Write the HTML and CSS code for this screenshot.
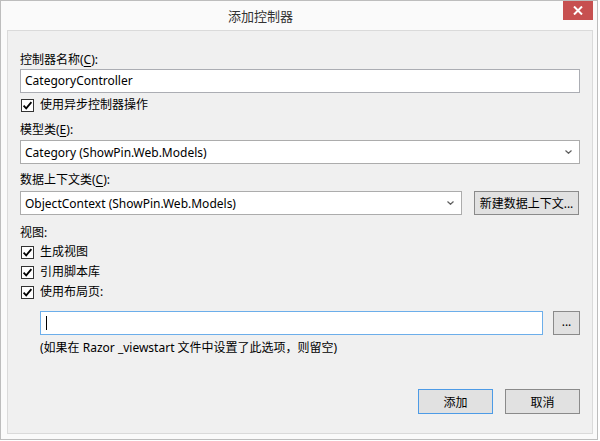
FILE: index.html
```html
<!DOCTYPE html>
<html lang="zh-CN">
<head>
<meta charset="utf-8">
<title>添加控制器</title>
<link rel="stylesheet" href="styles.css">
</head>
<body>
<div class="window">
  <div class="titlebar">
    <div class="title">添加控制器</div>
    <div class="close">
      <svg width="10" height="9" viewBox="0 0 10 9"><path d="M1 0.5 L9 8.5 M9 0.5 L1 8.5" stroke="#fff" stroke-width="2"/></svg>
    </div>
  </div>
  <div class="panel">
    <div class="label">控制器名称(<u>C</u>):</div>
    <div class="textbox t1">CategoryController</div>
    <div class="check c1"><span class="box"><svg width="11" height="11" viewBox="0 0 11 11"><path d="M1.6 5.6 L4.2 8.3 L9.4 2.2" fill="none" stroke="#000" stroke-width="1.8"/></svg></span><span>使用异步控制器操作</span></div>
    <div class="label l2">模型类(<u>E</u>):</div>
    <div class="select s2"><span>Category (ShowPin.Web.Models)</span><svg class="arrow" width="7" height="4" viewBox="0 0 7 4"><path d="M0.5 0.5 L3.5 3.3 L6.5 0.5" fill="none" stroke="#606060" stroke-width="1.2"/></svg></div>
    <div class="label l3">数据上下文类(<u>C</u>):</div>
    <div class="row r3">
      <div class="select s3"><span>ObjectContext (ShowPin.Web.Models)</span><svg class="arrow" width="7" height="4" viewBox="0 0 7 4"><path d="M0.5 0.5 L3.5 3.3 L6.5 0.5" fill="none" stroke="#606060" stroke-width="1.2"/></svg></div>
      <div class="btn newbtn">新建数据上下文...</div>
    </div>
    <div class="label l4">视图:</div>
    <div class="check c2"><span class="box"><svg width="11" height="11" viewBox="0 0 11 11"><path d="M1.6 5.6 L4.2 8.3 L9.4 2.2" fill="none" stroke="#000" stroke-width="1.8"/></svg></span><span>生成视图</span></div>
    <div class="check c3"><span class="box"><svg width="11" height="11" viewBox="0 0 11 11"><path d="M1.6 5.6 L4.2 8.3 L9.4 2.2" fill="none" stroke="#000" stroke-width="1.8"/></svg></span><span>引用脚本库</span></div>
    <div class="check c3"><span class="box"><svg width="11" height="11" viewBox="0 0 11 11"><path d="M1.6 5.6 L4.2 8.3 L9.4 2.2" fill="none" stroke="#000" stroke-width="1.8"/></svg></span><span>使用布局页:</span></div>
    <div class="row indent r4">
      <div class="textbox focus"><span class="caret"></span></div>
      <div class="btn dots">...</div>
    </div>
    <div class="note indent">(如果在 Razor _viewstart 文件中设置了此选项，则留空)</div>
    <div class="actions">
      <div class="btn action default">添加</div>
      <div class="btn action">取消</div>
    </div>
  </div>
</div>
</body>
</html>
```
FILE: styles.css
```css
html, body {
  margin: 0;
  padding: 0;
  background: #ffffff;
}
body {
  width: 600px;
  height: 441px;
  font-family: "Noto Sans", "Noto Sans CJK SC", sans-serif;
  font-size: 12px;
  color: #000;
}
.window {
  width: 598px;
  height: 440px;
  box-sizing: border-box;
  border: 1px solid #bdbdbd;
  background: #fafafa;
  padding: 0 4px 5px 6px;
  display: flex;
  flex-direction: column;
}
.titlebar {
  height: 29px;
  display: flex;
  align-items: flex-start;
}
.title {
  margin-left: 221px;
  margin-top: 6px;
  font-family: "Noto Sans CJK SC", sans-serif;
  font-size: 13px;
  line-height: 18px;
  color: #333;
}
.close {
  margin-left: auto;
  width: 30px;
  height: 19px;
  background: #c75050;
  display: flex;
  align-items: center;
  justify-content: center;
}
.panel {
  flex: 1;
  border: 1px solid #dadada;
  background: #f0f0f0;
  padding: 21px 12px 0 12px;
  display: flex;
  flex-direction: column;
}
.label, .note {
  height: 16px;
  line-height: 16px;
  white-space: nowrap;
}
u { text-underline-offset: 2px; }
.textbox {
  height: 24px;
  box-sizing: border-box;
  border: 1px solid #abadb3;
  background: #fff;
  padding: 0 4px;
  line-height: 22px;
  white-space: nowrap;
}
.t1 { margin-top: 1px; }
.check {
  height: 16px;
  display: flex;
  align-items: center;
  gap: 6px;
  padding-left: 1px;
  line-height: 16px;
}
.box {
  width: 13px;
  height: 13px;
  box-sizing: border-box;
  border: 1px solid #333;
  background: #fff;
  display: flex;
  align-items: center;
  justify-content: center;
}
.c1 { margin-top: 4px; }
.c2 { margin-top: 3px; }
.c3 { margin-top: 4px; }
.l2 { margin-top: 9px; }
.l3 { margin-top: 8px; }
.l4 { margin-top: 10px; }
.select {
  height: 24px;
  box-sizing: border-box;
  border: 1px solid #acacac;
  background: #fff;
  padding: 0 7px 0 4px;
  display: flex;
  align-items: center;
  justify-content: space-between;
  white-space: nowrap;
}
.s2 { margin-top: 2px; }
.row {
  display: flex;
}
.r3 { margin-top: 3px; gap: 12px; }
.s3 { flex: 1; }
.btn {
  box-sizing: border-box;
  border: 1px solid #8a8a8a;
  background: #e1e1e1;
  display: flex;
  align-items: center;
  justify-content: center;
  white-space: nowrap;
  color: #000;
}
.newbtn {
  width: 105px;
  height: 24px;
  margin-right: 1px;
}
.indent { padding-left: 20px; }
.r4 { margin-top: 11px; gap: 10px; }
.r4 .textbox { flex: 1; height: 24px; }
.focus {
  border-color: #6caeea;
  display: flex;
  align-items: center;
}
.caret {
  display: block;
  width: 1px;
  height: 14px;
  background: #000;
  margin-left: 1px;
}
.dots {
  width: 27px;
  height: 24px;
  line-height: 16px;
  padding-bottom: 3px;
}
.note { margin-top: 5px; }
.actions {
  margin-top: 33px;
  display: flex;
  justify-content: flex-end;
  gap: 12px;
}
.action {
  width: 75px;
  height: 25px;
}
.default {
  border-color: #4d9be6;
}
```
